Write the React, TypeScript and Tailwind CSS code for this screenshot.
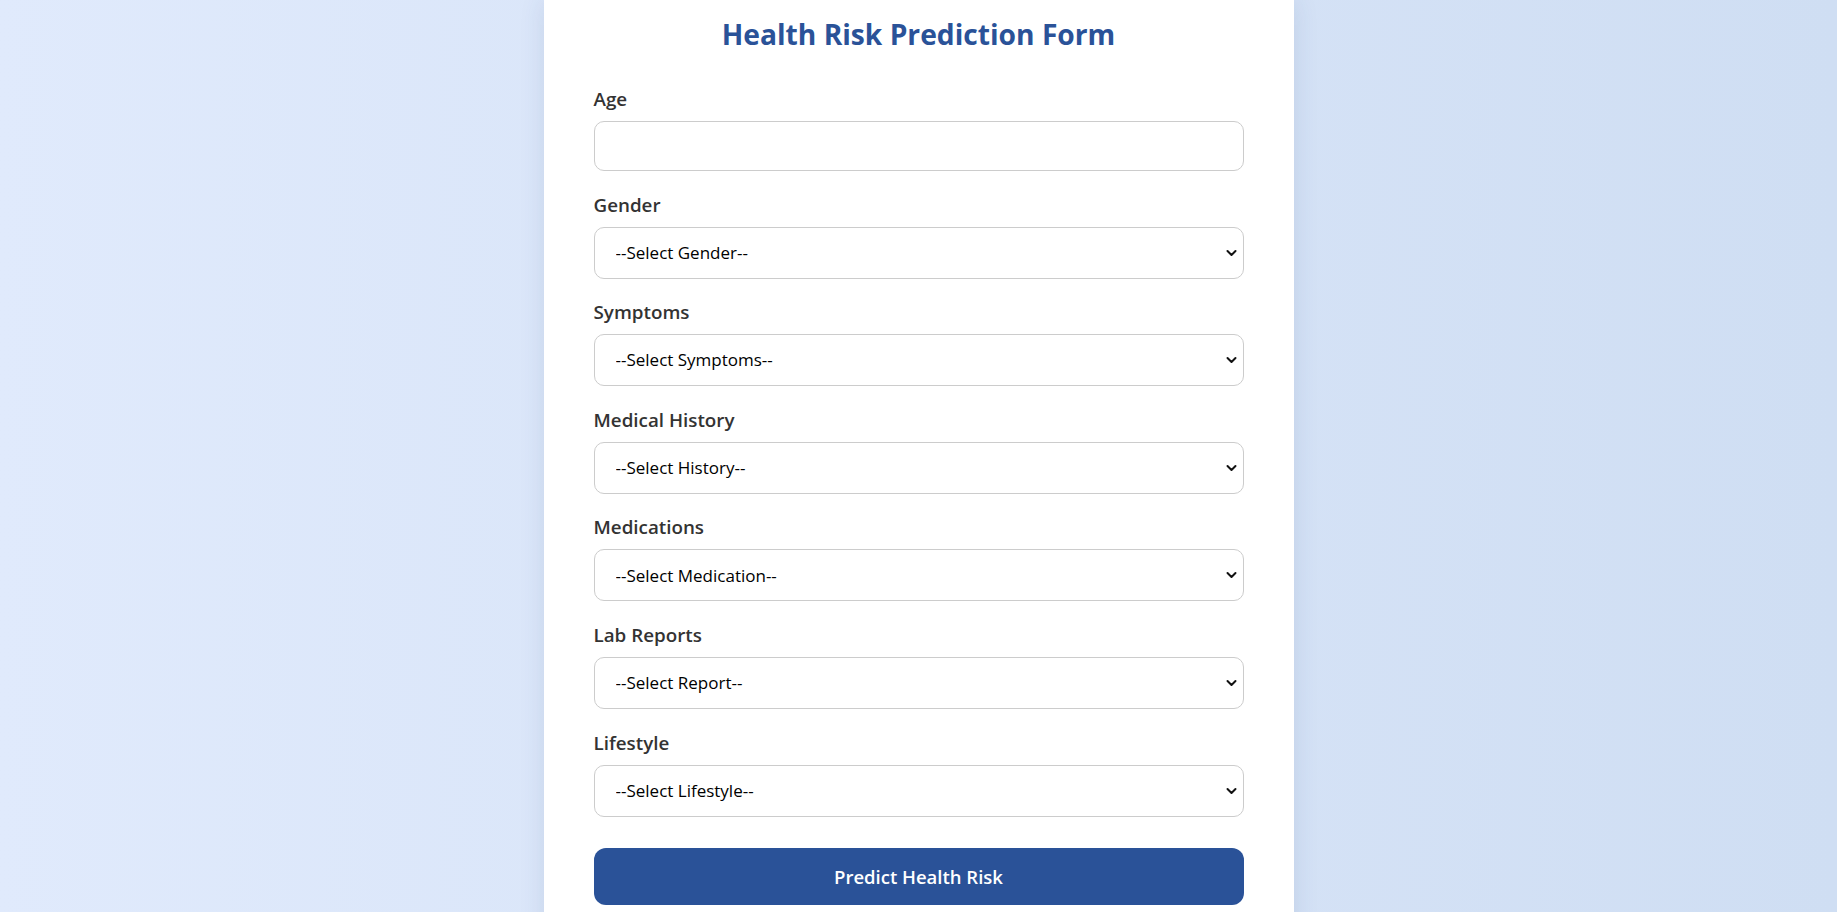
import React from "react";

const fields = [
  { label: "Gender", placeholder: "--Select Gender--" },
  { label: "Symptoms", placeholder: "--Select Symptoms--" },
  { label: "Medical History", placeholder: "--Select History--" },
  { label: "Medications", placeholder: "--Select Medication--" },
  { label: "Lab Reports", placeholder: "--Select Report--" },
  { label: "Lifestyle", placeholder: "--Select Lifestyle--" },
];

function Chevron() {
  return (
    <svg width="11" height="8" viewBox="0 0 11 8" className="absolute right-[7px] top-1/2 -translate-y-1/2 pointer-events-none">
      <path d="M1.5 2 L5.5 6 L9.5 2" fill="none" stroke="#111" strokeWidth="2" strokeLinecap="round" strokeLinejoin="round" />
    </svg>
  );
}

export default function App() {
  return (
    <div
      className="w-full h-[912px] overflow-hidden flex justify-center bg-gradient-to-r from-[#e0eafc] to-[#cfdef3]"
      style={{ fontFamily: '"Open Sans", "Noto Sans", sans-serif' }}
    >
      <div className="w-[750px] min-h-[960px] bg-white px-[50px] shadow-[0_0_24px_rgba(40,70,120,0.12)]">
        <h2 className="pt-[15px] mb-[34px] text-center text-[28.2px] leading-[38px] font-bold text-[#2a5298]">
          Health Risk Prediction Form
        </h2>
        <form onSubmit={(e) => e.preventDefault()}>
          <label className="block text-[18.8px] leading-[24px] font-semibold text-[#333] mb-[10px]">Age</label>
          <input
            type="number"
            className="block w-full h-[50px] mb-[21.6px] border border-[#ccc] rounded-[10px] px-[20px] text-[17px] outline-none bg-white"
          />
          {fields.map((f) => (
            <div key={f.label}>
              <label className="block text-[18.8px] leading-[24px] font-semibold text-[#333] mb-[10px]">{f.label}</label>
              <div className="relative mb-[21.6px]">
                <select
                  defaultValue=""
                  className="block w-full h-[52px] border border-[#ccc] rounded-[10px] pl-[21px] pr-[30px] text-[17px] text-black bg-white appearance-none outline-none"
                >
                  <option value="">{f.placeholder}</option>
                </select>
                <Chevron />
              </div>
            </div>
          ))}
          <button
            type="submit"
            className="mt-[10px] w-full h-[57px] rounded-[12px] bg-[#2a5298] text-white text-[18.5px] font-semibold"
          >
            Predict Health Risk
          </button>
        </form>
      </div>
    </div>
  );
}
